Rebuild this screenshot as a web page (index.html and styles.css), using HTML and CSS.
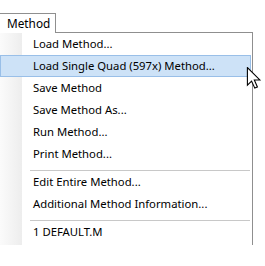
FILE: index.html
```html
<!DOCTYPE html>
<html lang="en">
<head>
    <meta charset="UTF-8">
    <title>Method menu</title>
    <link rel="stylesheet" href="styles.css">
</head>
<body>
    <div class="screen">
        <div class="menubar">
            <div class="tab">Method</div>
        </div>

        <div class="menu">
            <ul class="items">
                <li>Load Method...</li>
                <li class="hot">Load Single Quad (597x) Method...</li>
                <li>Save Method</li>
                <li>Save Method As...</li>
                <li>Run Method...</li>
                <li>Print Method...</li>
                <li class="sep"></li>
                <li>Edit Entire Method...</li>
                <li>Additional Method Information...</li>
                <li class="sep"></li>
                <li>1 DEFAULT.M</li>
            </ul>
        </div>

        <svg class="cursor" width="18" height="22" viewBox="0 0 13 20">
            <path d="M0.5 0.5 L0.5 16.5 L4.3 12.8 L7.2 19.2 L9.6 18.1 L6.8 11.8 L11.8 11.8 Z" fill="#fff" stroke="#000" stroke-width="1" stroke-linejoin="miter"/>
        </svg>
    </div>
</body>
</html>
```

FILE: styles.css
```css
:root {
    --text-color: #000;
    --border-color: #8f8f8f;
    --sep-color: #c8c8c8;
    --hot-fill: #cde2f7;
    --hot-border: #99bfe8;
}
body {
    margin: 0;
    padding: 0;
    background: #fff;
    font-family: "Noto Sans", sans-serif;
    font-size: 11.3px;
    color: var(--text-color);
}
.screen {
    position: relative;
    width: 265px;
    height: 266px;
    overflow: hidden;
    padding-top: 13px;
    box-sizing: border-box;
}
.menubar {
    display: flex;
    height: 19px;
}
.tab {
    position: relative;
    z-index: 1;
    width: 57px;
    margin-left: -1px;
    padding-left: 7px;
    box-sizing: border-box;
    border: 1px solid var(--border-color);
    border-bottom: none;
    background: #fff;
    height: 20px;
    line-height: 18px;
    font-size: 11.8px;
}
.menu {
    width: 253px;
    border-top: 1px solid var(--border-color);
    border-right: 1px solid var(--border-color);
    box-sizing: border-box;
    background: linear-gradient(to right, #fbfbfb 0, #ededed 22px, #fff 22px);
    padding-bottom: 2px;
}
.items {
    list-style: none;
    margin: 0;
    padding: 0;
}
.items li {
    height: 22px;
    line-height: 22px;
    padding-left: 33px;
    white-space: nowrap;
    box-sizing: border-box;
}
.items li.hot {
    background: var(--hot-fill);
    border: 1px solid var(--hot-border);
    line-height: 20px;
    padding-left: 32px;
    margin-right: 1px;
}
.items li.sep {
    height: 1px;
    padding: 0;
    margin: 5px 2px 0 30px;
    background: var(--sep-color);
}
.cursor {
    position: absolute;
    left: 245px;
    top: 67px;
}
```
